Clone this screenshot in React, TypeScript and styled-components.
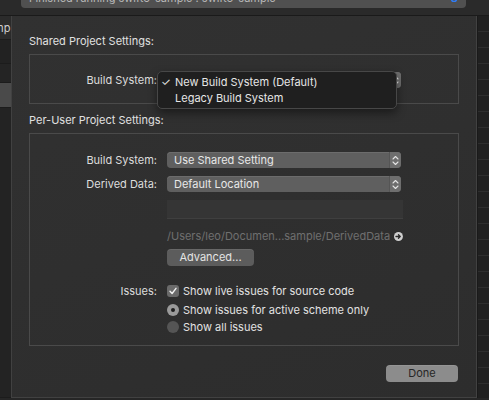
import React from "react";
import styled, { createGlobalStyle } from "styled-components";

const Global = createGlobalStyle`
  html, body { margin: 0; padding: 0; background: #252525; }
  body {
    font-family: Inter, "Noto Sans", sans-serif;
    font-size: 11px;
    color: #dcdcdc;
    width: 489px;
    height: 400px;
    overflow: hidden;
  }
  * { box-sizing: border-box; }
`;

const Page = styled.div`
  width: 489px;
  height: 400px;
  display: flex;
  flex-direction: column;
  background: #252525;
`;

const TopBar = styled.div`
  height: 16px;
  flex: none;
  background: #2a2a2a;
  border-bottom: 1px solid #1a1a1a;
  padding: 0 23px 0 21px;
  overflow: hidden;
`;

const TitleField = styled.div`
  margin-top: -12px;
  height: 20px;
  border-radius: 4px;
  background: #505050;
  display: flex;
  align-items: center;
  justify-content: space-between;
  padding: 0 8px 0 8px;
  color: #b9b9b9;
  line-height: 20px;
  white-space: nowrap;
`;

const Middle = styled.div`
  display: flex;
  flex: none;
`;

const LeftStrip = styled.div`
  width: 11px;
  flex: none;
  display: flex;
  flex-direction: column;
  overflow: hidden;
`;

const StripRow = styled.div<{ $h: number; $bg: string }>`
  height: ${(p) => p.$h}px;
  background: ${(p) => p.$bg};
  border-bottom: 1px solid #1c1c1c;
  color: #cfcfcf;
  line-height: ${(p) => p.$h}px;
  white-space: nowrap;
  flex: none;
`;

const ClippedText = styled.span`
  display: inline-block;
  margin-left: -6px;
`;

const RightStrip = styled.div`
  flex: 1;
  background: repeating-linear-gradient(
    to bottom,
    #202020 0px,
    #202020 15px,
    #2e2e2e 15px,
    #2e2e2e 16px
  );
  border-left: 1px solid #1a1a1a;
`;

const Sheet = styled.div`
  width: 466px;
  flex: none;
  background: linear-gradient(160deg, #313131, #2d2d2d);
  border: 1px solid #414141;
  border-top: none;
  padding: 18px 17px 12px 17px;
  display: flex;
  flex-direction: column;
`;

const SectionTitle = styled.div<{ $mt?: number }>`
  line-height: 14px;
  margin-top: ${(p) => p.$mt ?? 0}px;
  margin-bottom: 6px;
  color: #e0e0e0;
`;

const GroupBox = styled.div<{ $pt: number; $pb: number }>`
  border: 1px solid #4a4a4a;
  padding: ${(p) => p.$pt}px 0 ${(p) => p.$pb}px 0;
  display: flex;
  flex-direction: column;
`;

const Row = styled.div<{ $mt?: number; $h?: number }>`
  display: grid;
  grid-template-columns: 127px 1fr;
  column-gap: 10px;
  align-items: center;
  margin-top: ${(p) => p.$mt ?? 0}px;
  height: ${(p) => p.$h ?? 16}px;
`;

const Label = styled.div`
  text-align: right;
  color: #dddddd;
  white-space: nowrap;
`;

const Cell = styled.div`
  position: relative;
  display: flex;
  align-items: center;
  height: 100%;
`;

const Popup = styled.div`
  width: 234px;
  height: 16px;
  border-radius: 4px;
  background: #5f5f5f;
  display: flex;
  align-items: stretch;
  box-shadow: inset 0 1px 0 #6c6c6c;
  overflow: hidden;
`;

const PopupText = styled.div<{ $covered?: boolean }>`
  flex: 1;
  padding-left: 7px;
  line-height: 16px;
  color: #e8e8e8;
  white-space: nowrap;
  visibility: ${(p) => (p.$covered ? "hidden" : "visible")};
`;

const Stepper = styled.div`
  width: 12px;
  flex: none;
  background: #6e6e6e;
  border-left: 1px solid #555;
  display: flex;
  align-items: center;
  justify-content: center;
`;

const Menu = styled.div`
  position: absolute;
  left: -10px;
  top: -1px;
  width: 240px;
  height: 38px;
  background: #1f1f1f;
  border: 1px solid #474747;
  border-radius: 5px;
  box-shadow: 0 4px 10px rgba(0, 0, 0, 0.45);
  padding-top: 2px;
  z-index: 2;
`;

const MenuItem = styled.div`
  display: flex;
  align-items: center;
  height: 16px;
  padding-left: 3px;
  color: #e6e6e6;
  white-space: nowrap;
`;

const Check = styled.span`
  width: 14px;
  flex: none;
  font-size: 11px;
  color: #e8e8e8;
`;

const EmptyField = styled.div`
  width: 236px;
  height: 19px;
  background: #353535;
  border-bottom: 1px solid #3f3f3f;
`;

const PathText = styled.div`
  display: flex;
  align-items: center;
  width: 236px;
  gap: 4px;
  color: #6f6f6f;
  line-height: 14px;
  white-space: nowrap;
`;

const PlainButton = styled.div<{ $w: number; $bg: string; $fg: string }>`
  width: ${(p) => p.$w}px;
  height: 17px;
  border-radius: 4px;
  background: ${(p) => p.$bg};
  color: ${(p) => p.$fg};
  text-align: center;
  line-height: 17px;
  box-shadow: inset 0 1px 0 rgba(255, 255, 255, 0.08);
`;

const OptionLine = styled.div`
  display: flex;
  align-items: center;
  gap: 4px;
  white-space: nowrap;
  color: #e2e2e2;
`;

const CheckBox = styled.div`
  width: 12px;
  height: 12px;
  border-radius: 3px;
  background: #6a6a6a;
  display: flex;
  align-items: center;
  justify-content: center;
`;

const Radio = styled.div<{ $on?: boolean }>`
  width: 12px;
  height: 12px;
  border-radius: 50%;
  background: ${(p) => (p.$on ? "#9a9a9a" : "#555555")};
  display: flex;
  align-items: center;
  justify-content: center;
  &::after {
    content: "";
    width: 4px;
    height: 4px;
    border-radius: 50%;
    background: #1e1e1e;
    display: ${(p) => (p.$on ? "block" : "none")};
  }
`;

const Footer = styled.div`
  display: flex;
  justify-content: flex-end;
  margin-top: 19px;
  padding-right: 1px;
`;

const BottomStrip = styled.div`
  flex: 1;
  background: #262626;
`;

const Chevrons = () => (
  <svg width="7" height="11" viewBox="0 0 7 11">
    <path d="M1 4 L3.5 1.5 L6 4" fill="none" stroke="#e2e2e2" strokeWidth="1.1" strokeLinecap="round" strokeLinejoin="round" />
    <path d="M1 7 L3.5 9.5 L6 7" fill="none" stroke="#e2e2e2" strokeWidth="1.1" strokeLinecap="round" strokeLinejoin="round" />
  </svg>
);

const ArrowCircle = () => (
  <svg width="9" height="9" viewBox="0 0 9 9">
    <circle cx="4.5" cy="4.5" r="4.5" fill="#cfcfcf" />
    <path d="M2 4.5 H6.3 M4.5 2.7 L6.3 4.5 L4.5 6.3" fill="none" stroke="#2a2a2a" strokeWidth="1.3" strokeLinecap="round" strokeLinejoin="round" />
  </svg>
);

const CheckMark = () => (
  <svg width="10" height="10" viewBox="0 0 10 10">
    <path d="M2 5.2 L4.1 7.5 L8 2.3" fill="none" stroke="#f0f0f0" strokeWidth="1.4" strokeLinecap="round" strokeLinejoin="round" />
  </svg>
);

const BlueIcon = () => (
  <svg width="8" height="8" viewBox="0 0 8 8">
    <path d="M1.5 5 A2.5 2.5 0 1 0 4 2.5" fill="none" stroke="#2f7cf6" strokeWidth="1.5" />
  </svg>
);

const PopupButton = ({ text, covered }: { text: string; covered?: boolean }) => (
  <Popup>
    <PopupText $covered={covered}>{text}</PopupText>
    <Stepper>
      <Chevrons />
    </Stepper>
  </Popup>
);

export default function App() {
  return (
    <>
      <Global />
      <Page>
        <TopBar>
          <TitleField>
            <span>Finished running swift5-sample : swift5-sample</span>
            <BlueIcon />
          </TitleField>
        </TopBar>
        <Middle>
          <LeftStrip>
            <StripRow $h={24} $bg="#2b2b2b">
              <ClippedText>mp</ClippedText>
            </StripRow>
            <StripRow $h={24} $bg="#222222" />
            <StripRow $h={19} $bg="#242424" />
            <StripRow $h={25} $bg="#4a4a4a" />
            <StripRow $h={290} $bg="#232323" />
          </LeftStrip>
          <Sheet>
            <SectionTitle>Shared Project Settings:</SectionTitle>
            <GroupBox $pt={17} $pb={15}>
              <Row>
                <Label>Build System:</Label>
                <Cell>
                  <PopupButton text="New Build System (Default)" covered />
                  <Menu>
                    <MenuItem>
                      <Check>✓</Check>
                      New Build System (Default)
                    </MenuItem>
                    <MenuItem>
                      <Check />
                      Legacy Build System
                    </MenuItem>
                  </Menu>
                </Cell>
              </Row>
            </GroupBox>
            <SectionTitle $mt={9}>Per-User Project Settings:</SectionTitle>
            <GroupBox $pt={18} $pb={11}>
              <Row>
                <Label>Build System:</Label>
                <Cell>
                  <PopupButton text="Use Shared Setting" />
                </Cell>
              </Row>
              <Row $mt={8}>
                <Label>Derived Data:</Label>
                <Cell>
                  <PopupButton text="Default Location" />
                </Cell>
              </Row>
              <Row $mt={8} $h={19}>
                <span />
                <Cell>
                  <EmptyField />
                </Cell>
              </Row>
              <Row $mt={10} $h={14}>
                <span />
                <Cell>
                  <PathText>
                    /Users/leo/Documen...sample/DerivedData
                    <ArrowCircle />
                  </PathText>
                </Cell>
              </Row>
              <Row $mt={6} $h={17}>
                <span />
                <Cell>
                  <PlainButton $w={87} $bg="#5c5c5c" $fg="#e4e4e4">
                    Advanced...
                  </PlainButton>
                </Cell>
              </Row>
              <Row $mt={18} $h={14}>
                <Label>Issues:</Label>
                <Cell>
                  <OptionLine>
                    <CheckBox>
                      <CheckMark />
                    </CheckBox>
                    Show live issues for source code
                  </OptionLine>
                </Cell>
              </Row>
              <Row $mt={5} $h={14}>
                <span />
                <Cell>
                  <OptionLine>
                    <Radio $on />
                    Show issues for active scheme only
                  </OptionLine>
                </Cell>
              </Row>
              <Row $mt={3} $h={14}>
                <span />
                <Cell>
                  <OptionLine>
                    <Radio />
                    Show all issues
                  </OptionLine>
                </Cell>
              </Row>
            </GroupBox>
            <Footer>
              <PlainButton $w={72} $bg="#8c8c8c" $fg="#262626">
                Done
              </PlainButton>
            </Footer>
          </Sheet>
          <RightStrip />
        </Middle>
        <BottomStrip />
      </Page>
    </>
  );
}
